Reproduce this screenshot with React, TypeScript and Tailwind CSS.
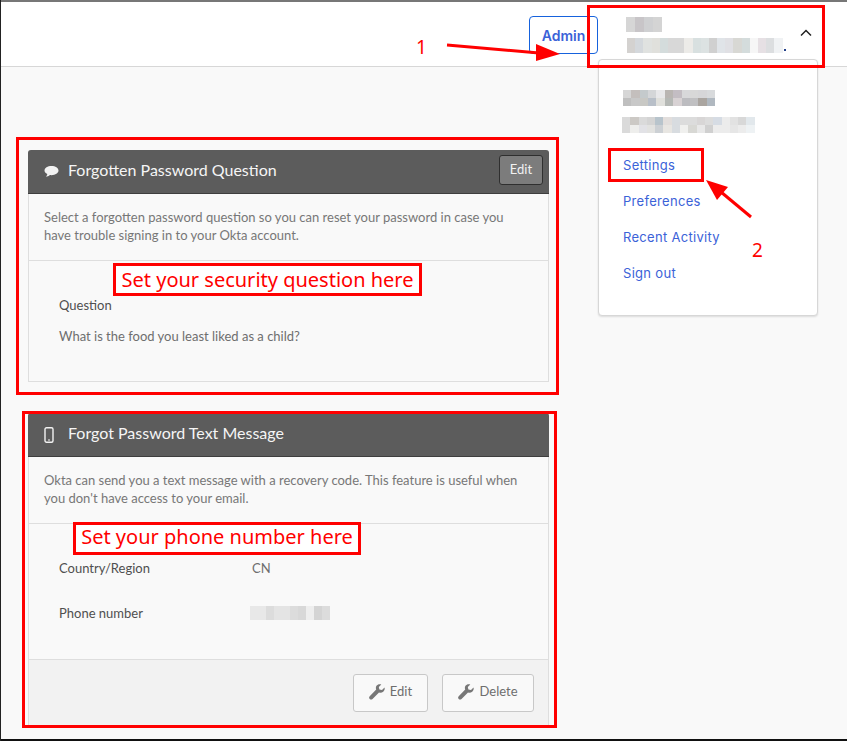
const sans = "font-['Lato','Liberation_Sans',sans-serif]";
const ui = "font-['Inter','Liberation_Sans',sans-serif]";

const Mosaic = ({ rows, w, h }: { rows: string[][]; w: number; h: number }) => (
  <div className="flex flex-col">
    {rows.map((r, i) => (
      <div key={i} className="flex">
        {r.map((c, j) => (
          <div key={j} style={{ width: w, height: h, background: c }} />
        ))}
      </div>
    ))}
  </div>
);

const Wrench = () => (
  <svg width="16" height="16" viewBox="0 0 16 16" className="text-[#777]" fill="currentColor">
    <path d="M15.5 3.6 13 6.1l-2.6-.6-.6-2.5L12.3.5C10.4-.2 8.4.4 7.5 1.8 6.7 3 6.7 4.5 7.2 5.6L.7 12.2c-.8.8-.8 2 0 2.8.8.8 2 .8 2.8 0l6.500-6.600c1.400.5 3 .3 4.200-.7 1.300-1.100 1.800-2.800 1.300-4.100z" />
  </svg>
);

const CardHeader = ({ icon, title, action }: { icon: React.ReactNode; title: string; action?: React.ReactNode }) => (
  <div className="-mx-px flex h-[44px] items-center justify-between rounded-t-[3px] border-b border-[#3e3e3e] bg-[#5c5c5c] pl-[16px] pr-[6px]">
    <div className="flex items-center">
      <div className="flex w-[24px] items-center">{icon}</div>
      <span className="pb-[4px] text-[16px] text-[#f5f5f5]">{title}</span>
    </div>
    {action}
  </div>
);

const Desc = ({ children }: { children: React.ReactNode }) => (
  <div className="h-[67px] whitespace-nowrap border-b border-[#dedede] px-[15px] pt-[14px] text-[13px] leading-[18px] text-[#777]">{children}</div>
);

const Box = ({ className }: { className: string }) => (
  <div className={`absolute border-[3px] border-[#f00] ${className}`} />
);

const Note = ({ className, children }: { className: string; children: React.ReactNode }) => (
  <div className={`absolute flex items-center justify-center whitespace-nowrap border-[3px] border-[#f00] bg-white font-['Noto_Sans',sans-serif] text-[20px] text-[#f00] ${className}`}>{children}</div>
);

const MenuLink = ({ children }: { children: React.ReactNode }) => (
  <div className={`h-[36px] pl-[24px] text-[13px] leading-[20px] tracking-[0.3px] text-[#3b62d8] ${ui}`}>{children}</div>
);

export default function App() {
  return (
    <div className={`relative h-[741px] w-[847px] overflow-hidden border-l border-[#222] bg-[#f9f9f9] ${sans}`}>
      <div className="h-[2px] bg-[#777]" />
      <header className="flex h-[65px] items-start justify-end border-b border-[#d7d7d7] bg-white pr-[249px] pt-[14px]">
        <div className={`flex h-[38px] w-[69px] items-center justify-center rounded-[4px] border border-[#1662dd] text-[14px] font-semibold text-[#3b62d8] ${ui}`}>
          Admin
        </div>
      </header>

      <main className="flex flex-col gap-[31px] pl-[27px] pt-[83px]">
        <section className="h-[232px] w-[521px] rounded-t-[3px] border-x border-b border-[#dedede] bg-[#f9f9f9]">
          <CardHeader
            title="Forgotten Password Question"
            icon={
              <svg width="15" height="13" viewBox="0 0 15 13" fill="#f2f2f2">
                <path d="M7.5 1C11.4 1 14.5 3 14.5 5.6S11.4 10.2 7.5 10.2c-.6 0-1.100 0-1.600-.1C4.800 11.200 3.300 11.700 1.800 11.800c.8-.8 1.400-1.700 1.500-2.800C1.500 8.200.5 7 .5 5.600.5 3 3.600 1 7.500 1z" />
              </svg>
            }
            action={
              <div className="-mt-[4px] flex h-[30px] w-[44px] items-center justify-center self-center rounded-[3px] border border-[#2f2f2f] bg-[#7c7c7c] text-[13px] text-[#f2f2f2]">
                Edit
              </div>
            }
          />
          <Desc>
            Select a forgotten password question so you can reset your password in case you
            <br />
            have trouble signing in to your Okta account.
          </Desc>
          <div className="pl-[30px] pt-[35px] text-[13px] leading-[18px]">
            <div className="text-[#4f4f4f]">Question</div>
            <div className="mt-[13px] text-[#6e6e6e]">What is the food you least liked as a child?</div>
          </div>
        </section>

        <section className="h-[315px] w-[521px] rounded-t-[3px] border-x border-b border-[#dedede] bg-[#f9f9f9]">
          <CardHeader
            title="Forgot Password Text Message"
            icon={
              <svg width="10" height="16" viewBox="0 0 10 16" fill="none" stroke="#f2f2f2">
                <rect x="1" y="0.700" width="8" height="14.600" rx="1.500" strokeWidth="1.400" />
                <rect x="4" y="12.500" width="2" height="1" fill="#f2f2f2" stroke="none" />
              </svg>
            }
          />
          <Desc>
            Okta can send you a text message with a recovery code. This feature is useful when
            <br />
            you don't have access to your email.
          </Desc>
          <div className="h-[135px] pl-[30px] pt-[35px] text-[13px] leading-[18px]">
            <div className="flex">
              <div className="w-[193px] text-[#4f4f4f]">Country/Region</div>
              <div className="text-[#6e6e6e]">CN</div>
            </div>
            <div className="mt-[27px] flex items-center">
              <div className="w-[191px] text-[#4f4f4f]">Phone number</div>
              <Mosaic
                w={8}
                h={14}
                rows={[["#e8e8e8", "#e8e8e8", "#dcdcdc", "#e4e4e4", "#e4e4e4", "#dcdcdc", "#d8d8d8", "#eeeeee", "#d4d4d4", "#dcdcdc"]]}
              />
            </div>
          </div>
          <div className="flex h-[68px] items-start justify-end gap-[14px] border-t border-[#dedede] bg-[#f2f2f2] pr-[14px] pt-[14px]">
            <div className="flex h-[38px] w-[75px] items-center justify-center gap-[5px] rounded-[3px] border border-[#c8c8c8] bg-[#f9f9f9] pb-[2px] text-[13px] text-[#6e6e6e]">
              <Wrench />
              Edit
            </div>
            <div className="flex h-[38px] w-[92px] items-center justify-center gap-[5px] rounded-[3px] border border-[#c8c8c8] bg-[#f9f9f9] pb-[2px] text-[13px] text-[#6e6e6e]">
              <Wrench />
              Delete
            </div>
          </div>
        </section>
      </main>

      {/* user menu */}
      <div className="absolute left-[597px] top-[59px] h-[257px] w-[220px] rounded-[4px] border border-[#d7d7d7] bg-white shadow-[0_1px_2px_rgba(0,0,0,0.12)]">
        <div className="pl-[24px] pt-[30px]">
          <Mosaic
            w={8.36}
            h={8}
            rows={[
              ["#d6d6d6", "#c4bfbd", "#c4cacc", "#d4d6d8", "#e8e8ea", "#b9b5b2", "#c3bdc3", "#d8d8da", "#d8d8d8", "#d6d6d8", "#d8dadc"],
              ["#bfbfbf", "#c8c8c8", "#c8c8c4", "#b8bfc8", "#e0e0dc", "#b5b8b5", "#d8d2d4", "#bcbcc0", "#c0c0c2", "#aaa5a0", "#b0b8c0"],
            ]}
          />
        </div>
        <div className="pl-[23px] pt-[11px]">
          <Mosaic
            w={8.31}
            h={8}
            rows={[
              ["#dadada", "#ccc9c5", "#dadada", "#d4d4d4", "#b8c4cc", "#e2dedc", "#d8dce0", "#dcdcdc", "#dcdcdc", "#d8d6d6", "#dcdcdc", "#d6dce4", "#ececec", "#e2e2e2", "#d8d8d8", "#e2e8ec"],
              ["#dadada", "#eeeeec", "#e2e2e6", "#e2e2e0", "#ccd0d4", "#e8e6e2", "#d8dce0", "#f0f0ee", "#d8d8d4", "#e8e8e8", "#d0d0d0", "#ececec", "#ececec", "#e6e6e6", "#ececec", "#eef2f4"],
            ]}
          />
        </div>
        <div className="pt-[22px]">
          <MenuLink>Settings</MenuLink>
          <MenuLink>Preferences</MenuLink>
          <MenuLink>Recent Activity</MenuLink>
          <MenuLink>Sign out</MenuLink>
        </div>
      </div>

      {/* user name in the header */}
      <div className="absolute left-[625px] top-[17px]">
        <Mosaic w={9} h={15} rows={[["#d6d6d6", "#c8c5c8", "#cfd0d2", "#d4d4d4"]]} />
      </div>
      <div className="absolute left-[626px] top-[38px] flex h-[15px] items-end">
        {["#d4d2d0", "#d4d8dc", "#e0e2e0", "#e0e0dc", "#d4dcdc", "#d8d8d8", "#d8d8d8", "#ecebe8", "#d8e0e0", "#dce2e2", "#d0d0d0", "#e0e4e8", "#e0e0e4", "#d8d8d4", "#d4dcdc", "#f6f6f6", "#e6e0e4", "#dcdee0", "#f0f2f4"].map((c, i) => (
          <div key={i} className="h-[15px] w-[8.2px]" style={{ background: c }} />
        ))}
        <div className="mb-[2px] ml-[1px] h-[2px] w-[2px] bg-[#23408a]" />
      </div>
      <svg className="absolute left-[799px] top-[29px]" width="12" height="8" viewBox="0 0 12 8" fill="none" stroke="#222" strokeWidth="1.500">
        <path d="M1 6.500 6 1.500l5 5" />
      </svg>

      {/* annotations */}
      <Box className="left-[586px] top-[5px] h-[63px] w-[238px]" />
      <Box className="left-[607px] top-[148px] h-[34px] w-[96px]" />
      <Box className="left-[15px] top-[137px] h-[258px] w-[543px]" />
      <Box className="left-[21px] top-[411px] h-[317px] w-[535px]" />
      <Note className="left-[112px] top-[263px] h-[33px] w-[309px]">Set your security question here</Note>
      <Note className="left-[72px] top-[522px] h-[33px] w-[288px] pb-[3px]">Set your phone number here</Note>
      <div className="absolute left-[415px] top-[35px] font-['Noto_Sans',sans-serif] text-[19px] leading-[24px] text-[#f00]">1</div>
      <div className="absolute left-[751px] top-[238px] font-['Noto_Sans',sans-serif] text-[19px] leading-[24px] text-[#f00]">2</div>
      <svg className="absolute left-0 top-0" width="847" height="741" fill="#f00" stroke="none">
        <path d="M446 45 538 53" stroke="#f00" strokeWidth="3" />
        <path d="M535 44 559 54 535 61z" />
        <path d="M750 217 720 192" stroke="#f00" strokeWidth="3" />
        <path d="M705 180 727 187 716 200z" />
      </svg>
      <div className="absolute bottom-0 left-0 h-[2px] w-full bg-[#111]" />
    </div>
  );
}
